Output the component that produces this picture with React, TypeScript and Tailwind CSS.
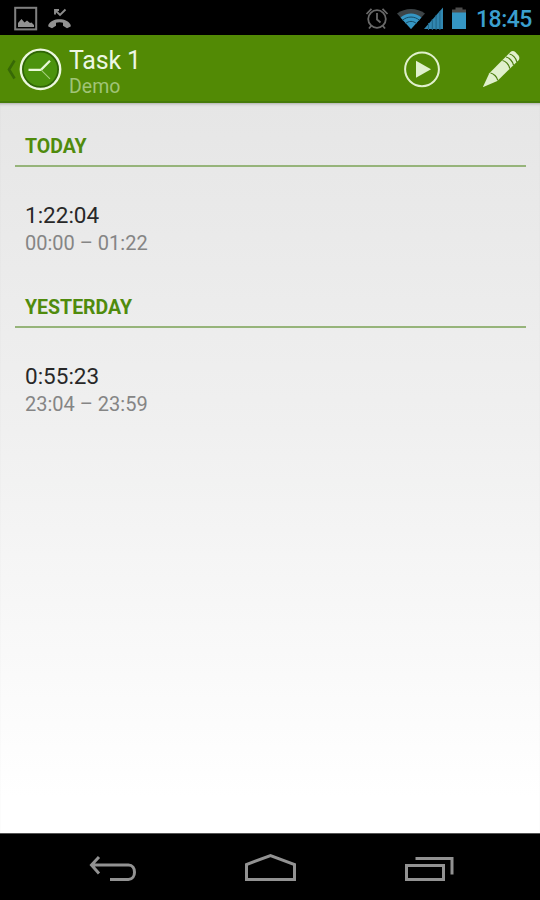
import React from "react";

function StatusBar() {
  return (
    <header className="flex h-[35px] shrink-0 items-center bg-black">
      <svg className="ml-[14px] h-[26px] w-[24px]" viewBox="0 0 24 26" fill="none">
        <rect x="1.200" y="2.800" width="21" height="21.600" stroke="#808080" strokeWidth="2" />
        <path d="M4 22v-4l3.500-4 3 3.500 2.500-2 3 2.500 1.500-.5 2.500 2.500v2z" fill="#929292" />
      </svg>
      <svg className="ml-[9px] h-[24px] w-[26px]" viewBox="0 0 26 24" fill="none">
        <path d="M8 8.500V4h4M8 4l5 5 5.500-5.500" stroke="#8d8d8d" strokeWidth="1.900" />
        <path d="M1.300 19C4.500 11.200 20.500 11.200 23.700 19v1.500L20 22.300l-4-2.600v-3c-2-.7-5-.7-7 0v3l-4 2.600-3.700-1.800z" fill="#929292" />
      </svg>
      <div className="flex-1" />
      <svg className="h-[26px] w-[26px]" viewBox="0 0 26 26" fill="none" stroke="#696969" strokeWidth="1.800">
        <circle cx="13" cy="14" r="8.800" />
        <path d="M13 8v6.500l3.500 3M2.500 9l5-5.200M23.500 9l-5-5.200M7.500 20.500L5 23.500M18.500 20.500l2.500 3" />
      </svg>
      <svg className="ml-[7px] h-[26px] w-[28px]" viewBox="0 0 28 26" fill="none">
        <path d="M0 8.500C8 2.500 20 2.500 28 8.500L14 24z" fill="#3d4447" />
        <path d="M3.500 12.500C10 7 18 7 24.500 12.500L14 24z" fill="#3596c4" />
        <path d="M5.500 15.200C10.500 11 17.500 11 22.500 15.200M8.500 18.500c3.500-2.800 7.500-2.800 11 0" stroke="#174a62" strokeWidth="1" />
      </svg>
      <svg className="-ml-[1px] h-[26px] w-[20px]" viewBox="0 0 20 26">
        <path d="M0 24L19 2.500V24z" fill="#3187b1" />
        <path d="M4.500 18v7M8.300 14v11M12.100 10v15M15.900 6v19" stroke="#206587" strokeWidth="1" />
      </svg>
      <svg className="ml-[7px] h-[26px] w-[16px]" viewBox="0 0 16 26">
        <path d="M4.500 2.500h7v2H15v3.500H1V4.500h3.500z" fill="#4c4c4c" />
        <rect x="1" y="7.500" width="14" height="16.500" fill="#3596c4" />
      </svg>
      <time className="ml-[9px] mr-[7px] mt-[4px] w-[57px] whitespace-nowrap text-[23px] font-medium leading-[26px] tracking-[-0.500px] text-[#3ba0cf]">18:45</time>
    </header>
  );
}

function ActionBar() {
  return (
    <div className="flex h-[68px] shrink-0 items-start border-b-2 border-[#467b0a] bg-[#528a05]">
      <svg className="ml-[6px] mt-[24px] h-[22px] w-[11px]" viewBox="0 0 11 22" fill="none">
        <path d="M8.500 1.500L3 10.500l5.500 9" stroke="#376806" strokeWidth="2.600" />
      </svg>
      <svg className="ml-[2px] mt-[12px] h-[44px] w-[44px]" viewBox="0 0 44 44" fill="none">
        <circle cx="21.500" cy="22.300" r="18.500" fill="#4b930d" stroke="#2e6506" strokeWidth="3.500" />
        <circle cx="21.500" cy="22.300" r="19.700" stroke="#ecf8df" strokeWidth="2.400" />
        <path d="M9.500 22.800H22l9-9" stroke="#e8f8d8" strokeWidth="2.300" />
        <path d="M22 22.800l9 9" stroke="#a5cf7d" strokeWidth="1.100" />
      </svg>
      <div className="ml-[6px] mt-[11px] flex flex-col whitespace-nowrap">
        <h1 className="text-[25px] leading-[30px] tracking-[-0.200px] text-[#edf7e4]">Task 1</h1>
        <p className="-mt-[1px] text-[19.500px] leading-[24px] text-[#a0c477]">Demo</p>
      </div>
      <div className="flex-1" />
      <button aria-label="Start timer" className="mt-[15px]">
        <svg className="h-[38px] w-[38px]" viewBox="0 0 38 38" fill="none">
          <circle cx="19" cy="19.300" r="16.900" stroke="#e0f0cc" strokeWidth="2" />
          <path d="M13 10.800v17L28 19.300z" fill="#e0f0cc" />
        </svg>
      </button>
      <button aria-label="Edit task" className="ml-[41px] mr-[19px] mt-[14px]">
        <svg className="h-[40px] w-[39px]" viewBox="0 0 39 40" fill="none">
          <path d="M.8 38.300L7.300 24.300 28.500 3c1.300-1.300 3.300-1.300 4.800 0l3.200 3.500c1.200 1.500 1.200 3.300 0 4.700L15.300 32z" fill="#e0f0cc" />
          <path d="M8.500 24c3 .5 6.500 3.800 7.300 7.300M20.500 11.500c3 .5 6.500 4 7.300 8.200M24 8c3 .5 6.700 4 7.500 8.200M27.500 5c3 .5 6.500 3.800 7.300 7.800" stroke="#4b7d0e" strokeWidth="1.200" />
        </svg>
      </button>
    </div>
  );
}

interface EntryProps {
  title: string;
  duration: string;
  range: string;
}

function DaySection({ title, duration, range }: EntryProps) {
  return (
    <section className="flex h-[161px] flex-col whitespace-nowrap pl-[15px] pr-[14px]">
      <h2 className="h-[35px] border-b-2 border-[#96b47a] pl-[10px] pt-[3px] text-[19.500px] font-bold leading-[24px] text-[#508b0d]">{title}</h2>
      <div className="pl-[10px] pt-[34px]">
        <p className="text-[22.500px] leading-[28px] text-[#282828]">{duration}</p>
        <p className="text-[20px] leading-[28px] text-[#858585]">{range}</p>
      </div>
    </section>
  );
}

function NavigationBar() {
  return (
    <nav className="flex h-[67px] shrink-0 items-start border-t border-[#555] bg-black pt-[18px]">
      <svg className="ml-[88px] h-[36px] w-[50px]" viewBox="0 0 50 36" fill="none" stroke="#929292" strokeWidth="3">
        <path d="M3 13h37.500c8 0 8 14.400 0 14.400H22M11 5L3.500 13l7.500 8.500" />
      </svg>
      <svg className="ml-[106px] h-[36px] w-[54px]" viewBox="0 0 54 36" fill="none" stroke="#929292" strokeWidth="3">
        <path d="M2.500 27.500v-15L26.500 3.500l24 9v15z" />
      </svg>
      <svg className="ml-[106px] h-[36px] w-[52px]" viewBox="0 0 52 36" fill="none" stroke="#929292" strokeWidth="3">
        <rect x="2.500" y="13.500" width="37" height="14" />
        <path d="M11.500 6.500h36.500v16" />
      </svg>
    </nav>
  );
}

export default function App() {
  return (
    <div className="flex h-[900px] w-[540px] flex-col overflow-hidden bg-black font-['Roboto',sans-serif]">
      <StatusBar />
      <ActionBar />
      <main className="min-h-0 flex-1 bg-linear-to-b from-[#e6e6e6] from-0% via-[#f0f0f0] via-45% to-white to-95% pt-[29px] shadow-[inset_0_3px_3px_-2px_#aaa]">
        <DaySection title="TODAY" duration="1:22:04" range="00:00 – 01:22" />
        <DaySection title="YESTERDAY" duration="0:55:23" range="23:04 – 23:59" />
      </main>
      <NavigationBar />
    </div>
  );
}
